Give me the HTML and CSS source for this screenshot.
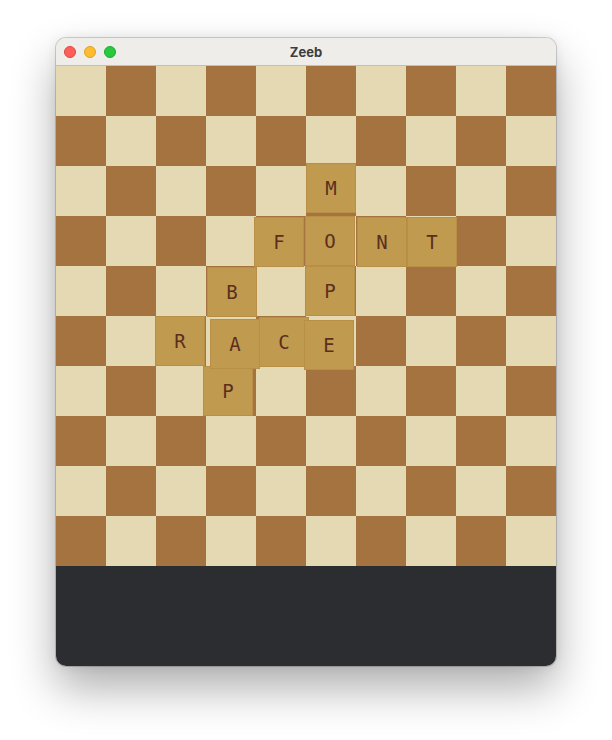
FILE: index.html
```html
<!DOCTYPE html>
<html>
<head>
<meta charset="utf-8">
<link rel="stylesheet" href="styles.css">
</head>
<body>
<div class="window">
  <div class="titlebar">
    <div class="lights">
      <span class="light red"></span>
      <span class="light yellow"></span>
      <span class="light green"></span>
    </div>
    <div class="title">Zeeb</div>
  </div>
  <div class="board">
    <div class="tile t-m">M</div>
    <div class="tile t-f">F</div>
    <div class="tile t-o">O</div>
    <div class="tile t-n">N</div>
    <div class="tile t-t">T</div>
    <div class="tile t-b">B</div>
    <div class="tile t-p1">P</div>
    <div class="tile t-r">R</div>
    <div class="tile t-c">C</div>
    <div class="tile t-p2">P</div>
    <div class="tile t-a">A</div>
    <div class="tile t-e">E</div>
  </div>
  <div class="footer"></div>
</div>
</body>
</html>
```

FILE: styles.css
```css
html, body {
  margin: 0;
  padding: 0;
  background: #ffffff;
}
body {
  padding: 38px 0 0 56px;
  min-height: 740px;
  box-sizing: border-box;
}
.window {
  width: 500px;
  border-radius: 10px;
  overflow: hidden;
  box-shadow: 0 0 0 1px rgba(0,0,0,0.16), 0 22px 45px rgba(0,0,0,0.32), 0 0 12px rgba(0,0,0,0.08);
}
.titlebar {
  height: 27px;
  background: #efedea;
  border-bottom: 1px solid #cdbf9c;
  display: flex;
  align-items: center;
  justify-content: center;
  position: relative;
}
.lights {
  position: absolute;
  left: 8px;
  top: 8px;
  display: flex;
  gap: 8px;
}
.light {
  width: 12px;
  height: 12px;
  border-radius: 50%;
  box-sizing: border-box;
}
.red { background: #fe5f57; border: 0.5px solid #e0443e; }
.yellow { background: #febc2e; border: 0.5px solid #dea123; }
.green { background: #28c840; border: 0.5px solid #1aab29; }
.title {
  font-family: "Inter", "Open Sans", sans-serif;
  font-weight: 700;
  font-size: 13px;
  color: #3d3d3d;
  margin-top: 1px;
}
.board {
  width: 500px;
  height: 500px;
  position: relative;
  background: conic-gradient(#a57340 0 25%, #e5d9b4 0 50%, #a57340 0 75%, #e5d9b4 0) 0 0 / 100px 100px;
}
.footer {
  height: 100px;
  background: #2c2d31;
}
.tile {
  position: absolute;
  width: 50px;
  height: 50px;
  box-sizing: border-box;
  background: #c09a4e;
  border: 1px solid #b98f48;
  display: flex;
  align-items: center;
  justify-content: center;
  font-family: "DejaVu Sans Mono", monospace;
  font-size: 19px;
  color: #5a2f1e;
}
.t-m { left: 250px; top: 97px; }
.t-f { left: 198px; top: 151px; }
.t-o { left: 249px; top: 150px; }
.t-n { left: 301px; top: 151px; }
.t-t { left: 351px; top: 151px; }
.t-b { left: 151px; top: 201px; }
.t-p1 { left: 249px; top: 200px; }
.t-r { left: 99px; top: 250px; }
.t-c { left: 203px; top: 251px; }
.t-p2 { left: 147px; top: 300px; }
.t-a { left: 154px; top: 253px; }
.t-e { left: 248px; top: 254px; }
```
